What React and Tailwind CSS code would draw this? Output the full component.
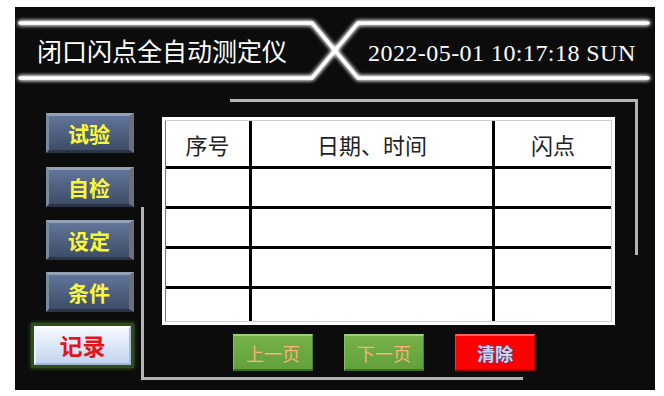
import React from "react";

const cjk = { fontFamily: '"Noto Sans CJK SC", "Noto Sans", sans-serif' };

// 左侧菜单按钮
const SideButton = ({ label }) => (
  <div
    className="w-[88px] h-[40px] flex items-center justify-center border-t-[3px] border-l-[3px] border-r-[5px] border-b-[3px] border-t-[#95a3b8] border-l-[#7c8aa0] border-r-[#6c7078] border-b-[#2c3546] bg-gradient-to-b from-[#62759a] to-[#3e4d67] text-[21px] font-bold text-[#f8f83a] leading-none"
    style={cjk}
  >
    {label}
  </div>
);

const GreenButton = ({ label }) => (
  <div
    className="w-[80px] h-[37px] flex items-center justify-center border-t-2 border-l border-r border-b-2 border-t-[#9bd17a] border-l-[#86be62] border-r-[#4f7e30] border-b-[#3f6a25] bg-gradient-to-b from-[#74b248] to-[#62a03a] text-[18px] text-[#f9b27a] leading-none"
    style={cjk}
  >
    {label}
  </div>
);

const rows = [0, 1, 2, 3];

export default function App() {
  return (
    <div className="w-[664px] h-[396px] bg-white pt-[7px] pl-[15px]">
      <div className="relative w-[640px] h-[383px] bg-[#0c0c0c] overflow-hidden">
        {/* 标题栏 */}
        <div className="relative h-[93px]">
          <svg className="absolute inset-0" width="640" height="93" viewBox="0 0 640 93">
            <defs>
              <filter id="glow" x="-10%" y="-50%" width="120%" height="200%">
                <feGaussianBlur stdDeviation="2" result="b" />
                <feMerge>
                  <feMergeNode in="b" />
                  <feMergeNode in="b" />
                  <feMergeNode in="SourceGraphic" />
                </feMerge>
              </filter>
            </defs>
            <g filter="url(#glow)" fill="none" stroke="#ffffff" strokeWidth="3.5" strokeLinecap="round">
              <path d="M5 16 H297 L343 71 H633" />
              <path d="M5 71 H297 L343 16 H633" />
            </g>
          </svg>
          <div className="relative flex h-[87px] items-center">
            <div className="w-[331px] pl-[22px] text-[25px] text-white leading-none" style={cjk}>
              闭口闪点全自动测定仪
            </div>
            <div
              className="pl-[22px] pt-[4px] text-[24px] tracking-[0.45px] text-white leading-none whitespace-nowrap"
              style={{ fontFamily: '"Liberation Serif", serif' }}
            >
              2022-05-01 10:17:18 SUN
            </div>
          </div>
        </div>

        {/* 装饰线 */}
        <div className="absolute left-[215px] top-[92px] w-[408px] h-[156px] border-t-[3px] border-r-[3px] border-[#b4b4b4]" />
        <div className="absolute left-[126px] top-[200px] w-[382px] h-[173px] border-l-[3px] border-b-[3px] border-[#b4b4b4]" />

        {/* 主体 */}
        <div className="relative flex">
          <div className="w-[119px] flex flex-col items-end pt-[13px]">
            <SideButton label="试验" />
            <div className="mt-[14px]"><SideButton label="自检" /></div>
            <div className="mt-[13px]"><SideButton label="设定" /></div>
            <div className="mt-[12px]"><SideButton label="条件" /></div>
            <div className="mt-[11px] w-[103px] h-[45px] border-[3px] border-[#2e4d18] shadow-[0_0_4px_#3d6a20]">
              <div
                className="h-full flex items-center justify-center border-t-2 border-l-2 border-r-2 border-b-2 border-t-white border-l-[#eef4fc] border-r-[#a9bfdc] border-b-[#a3b9d6] bg-gradient-to-b from-[#f4f8fd] to-[#c3d6f0] text-[23px] font-bold text-[#e3141c] leading-none"
                style={cjk}
              >
                记录
              </div>
            </div>
          </div>

          <div className="ml-[28px] pt-[17px]">
            {/* 记录表格 */}
            <div className="w-[453px] h-[208px] bg-white p-[3px]">
              <div className="h-full flex flex-col border border-[#cfcfcf] border-l-[#777]" style={cjk}>
                <div className="h-[45px] flex text-[22px] text-[#222] leading-none">
                  <div className="w-[86px] flex items-center justify-center border-r-[3px] border-black">序号</div>
                  <div className="w-[243px] flex items-center justify-center border-r-[3px] border-black">日期、时间</div>
                  <div className="flex-1 flex items-center justify-center">闪点</div>
                </div>
                {rows.map((r) => (
                  <div
                    key={r}
                    className={"flex border-t-[3px] border-black " + (r === 3 ? "flex-1" : "h-[40px]")}
                  >
                    <div className="w-[86px] border-r-[3px] border-black" />
                    <div className="w-[243px] border-r-[3px] border-black" />
                    <div className="flex-1" />
                  </div>
                ))}
              </div>
            </div>

            {/* 翻页按钮 */}
            <div className="flex mt-[9px] pl-[71px] gap-[31px]">
              <GreenButton label="上一页" />
              <GreenButton label="下一页" />
              <div
                className="w-[80px] h-[37px] flex items-center justify-center border-t-2 border-l border-r border-b-2 border-t-[#ff6060] border-l-[#ff3030] border-r-[#c00000] border-b-[#a00000] bg-[#ff0000] text-[18px] font-bold text-[#c9d8f0] leading-none [text-shadow:0_0_1px_#2f55a8,0_0_2px_#2f55a8]"
                style={cjk}
              >
                清除
              </div>
            </div>
          </div>
        </div>
      </div>
    </div>
  );
}
